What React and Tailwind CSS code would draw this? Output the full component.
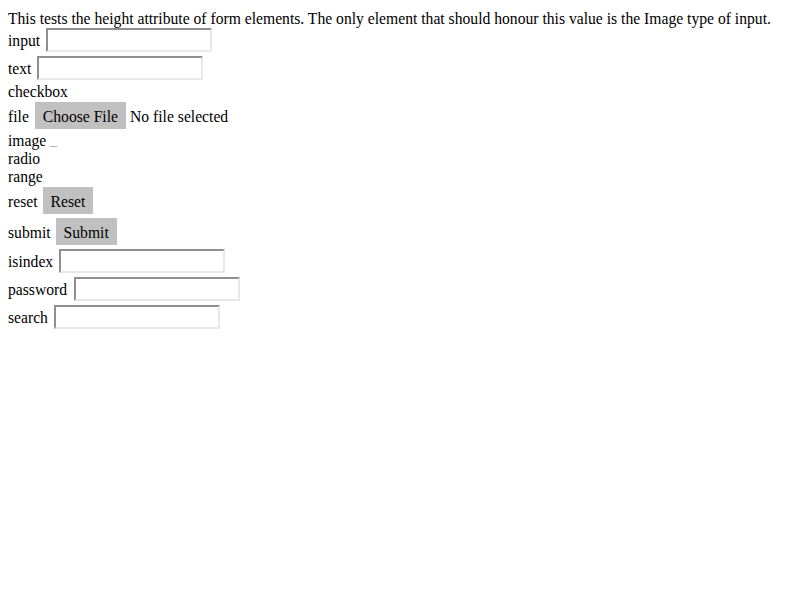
export default function App() {
  const serif = { fontFamily: '"Liberation Serif", "Times New Roman", serif' };
  const Field = ({ w = 'w-[166px]' }) => (
    <span className={`inline-block ${w} h-[24px] border-2 border-t-[#8f8f8f] border-l-[#8f8f8f] border-b-[#e8e8e8] border-r-[#e8e8e8] bg-white`} />
  );
  const Btn = ({ children }) => (
    <span className="inline-flex items-center pt-[2px] h-[27px] px-[8px] bg-[#c0c0c0] text-black">{children}</span>
  );
  const L = ({ children }) => <span className="pt-[2px]">{children}</span>;
  return (
    <div className="bg-white text-black text-[15.65px] leading-[18px] px-[8px] pt-[8px] min-h-[600px]" style={serif}>
      <div className="h-[18px] pt-[2px]">This tests the height attribute of form elements. The only element that should honour this value is the Image type of input.</div>
      <div className="h-[28px] flex items-center gap-[6px]"><L>input</L><Field /></div>
      <div className="h-[28px] flex items-center gap-[6px]"><L>text</L><Field /></div>
      <div className="h-[18px] pt-[1px]">checkbox</div>
      <div className="h-[31px] flex items-center"><L>file</L><span className="ml-[6px]"><Btn>Choose File</Btn></span><span className="ml-[4px] pt-[2px]">No file selected</span></div>
      <div className="h-[18px] flex items-end"><span className="translate-y-[1px]">image</span><span className="ml-[4px] mb-[2px] inline-block w-[7px] h-[1px] bg-[#b0b0b0]" /></div>
      <div className="h-[18px] pt-[1px]">radio</div>
      <div className="h-[18px] pt-[1px]">range</div>
      <div className="h-[31px] flex items-center gap-[5px]"><L>reset</L><Btn>Reset</Btn></div>
      <div className="h-[31px] flex items-center gap-[5px]"><L>submit</L><Btn>Submit</Btn></div>
      <div className="h-[28px] flex items-center gap-[6px]"><L>isindex</L><Field /></div>
      <div className="h-[28px] flex items-center gap-[7px]"><L>password</L><Field /></div>
      <div className="h-[28px] flex items-center gap-[6px]"><L>search</L><Field /></div>
    </div>
  );
}
